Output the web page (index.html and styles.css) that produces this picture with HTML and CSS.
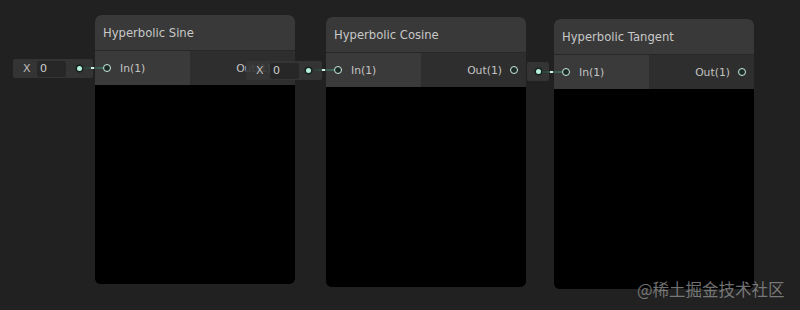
FILE: index.html
```html
<!DOCTYPE html>
<html>
<head>
<meta charset="utf-8">
<link rel="stylesheet" href="styles.css">
</head>
<body>
<div class="canvas">
  <div class="node n1">
    <div class="node-title">Hyperbolic Sine</div>
    <div class="ports">
      <div class="port-in"><span class="port"></span><span class="label">In(1)</span></div>
      <div class="port-out"><span class="label">Out(1)</span><span class="port"></span></div>
    </div>
    <div class="node-body"></div>
  </div>
  <div class="node n2">
    <div class="node-title">Hyperbolic Cosine</div>
    <div class="ports">
      <div class="port-in"><span class="port"></span><span class="label">In(1)</span></div>
      <div class="port-out"><span class="label">Out(1)</span><span class="port"></span></div>
    </div>
    <div class="node-body"></div>
  </div>
  <div class="node n3">
    <div class="node-title">Hyperbolic Tangent</div>
    <div class="ports">
      <div class="port-in"><span class="port"></span><span class="label">In(1)</span></div>
      <div class="port-out"><span class="label">Out(1)</span><span class="port"></span></div>
    </div>
    <div class="node-body"></div>
  </div>

  <div class="editor e1"><span class="ex">X</span><span class="field">0</span><span class="dot"></span></div>
  <div class="editor e2"><span class="ex">X</span><span class="field">0</span><span class="dot"></span></div>
  <div class="editor e3"><span class="dot"></span></div>

  <div class="wire w1"><span class="dash"></span></div>
  <div class="wire w2"><span class="dash"></span></div>
  <div class="wire w3"><span class="dash"></span></div>

  <div class="watermark">@稀土掘金技术社区</div>
</div>
</body>
</html>
```
FILE: styles.css
```css
html, body {
  margin: 0;
  padding: 0;
  background: #212121;
}
.canvas {
  position: relative;
  width: 800px;
  height: 310px;
  overflow: hidden;
  font-family: "DejaVu Sans", "Noto Sans", sans-serif;
  color: #c4c4c4;
}
.node {
  position: absolute;
  width: 200px;
  height: 270px;
  border-radius: 6px;
  overflow: hidden;
  display: flex;
  flex-direction: column;
  background: #000;
}
.n1 { left: 95px; top: 15px; height: 269px; }
.n2 { left: 326px; top: 17px; }
.n3 { left: 554px; top: 19px; }
.node-title {
  height: 36px;
  flex: 0 0 36px;
  box-sizing: border-box;
  background: #393939;
  border-bottom: 1px solid #282828;
  padding-left: 8px;
  padding-top: 1px;
  display: flex;
  align-items: center;
  font-size: 11.6px;
  color: #c8c8c8;
}
.ports {
  display: flex;
  flex: 0 0 34px;
}
.port-in {
  flex: 0 0 95px;
  background: #3a3a3a;
  display: flex;
  align-items: center;
  padding-left: 8px;
  box-sizing: border-box;
}
.port-out {
  flex: 1;
  background: #2e2e2e;
  display: flex;
  align-items: center;
  justify-content: flex-end;
  padding-right: 8px;
}
.port {
  width: 6px;
  height: 6px;
  border: 1.5px solid #c9eee2;
  border-radius: 50%;
  background: #1e2a26;
}
.label {
  font-size: 10.8px;
  color: #c4c4c4;
  padding-top: 1px;
}
.port-in .label { margin-left: 9px; }
.port-out .label { margin-right: 8px; }
.node-body {
  flex: 1;
  background: #000;
}
.editor {
  position: absolute;
  height: 19px;
  background: rgba(54, 54, 54, 0.9);
  border-radius: 2px;
  display: flex;
  align-items: center;
  font-size: 11px;
  color: #c4c4c4;
}
.e1 { left: 13px; top: 59px; width: 80px; }
.e2 { left: 246px; top: 61px; width: 76px; }
.e3 { left: 527px; top: 62px; width: 22px; }
.ex {
  margin-left: 10px;
  width: 14px;
  color: #bdbdbd;
}
.field {
  width: 26px;
  height: 16px;
  line-height: 16px;
  padding-left: 3px;
  background: #272727;
  border-radius: 2px;
  color: #d0d0d0;
}
.dot {
  width: 5px;
  height: 5px;
  border-radius: 50%;
  background: #b6f0de;
  box-shadow: 0 0 0 1.5px #16221e;
  margin-left: auto;
  margin-right: 11px;
}
.e3 .dot { margin-right: 8px; }
.wire {
  position: absolute;
  height: 2px;
  background: linear-gradient(to right, #2a3d37, #3f6a5c);
}
.w1 { left: 83px; top: 67px; width: 20px; }
.w2 { left: 314px; top: 69px; width: 20px; }
.w3 { left: 542px; top: 71px; width: 20px; }
.dash {
  position: absolute;
  left: 8px;
  top: 0;
  width: 3px;
  height: 2px;
  background: #d8efe8;
}
.watermark {
  position: absolute;
  left: 637px;
  top: 277px;
  font-family: "Noto Sans CJK SC", sans-serif;
  font-size: 16.5px;
  color: rgba(150, 150, 150, 0.75);
  white-space: nowrap;
}
```
